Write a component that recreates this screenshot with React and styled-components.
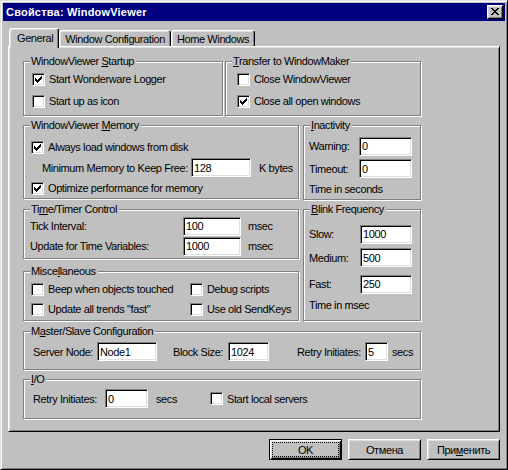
import React from 'react';
import styled, { createGlobalStyle } from 'styled-components';

const GlobalStyle = createGlobalStyle`
  html, body {
    margin: 0;
    padding: 0;
    background: #c0c0c0;
  }
  body {
    font-family: "Liberation Sans", Arial, sans-serif;
    font-size: 11px;
    color: #000;
  }
  * {
    box-sizing: border-box;
  }
`;

const Window = styled.div`
  width: 508px;
  height: 470px;
  background: #c0c0c0;
  border: 1px solid;
  border-color: #dfdfdf #000 #000 #dfdfdf;
  box-shadow: inset 1px 1px #fff, inset -1px -1px #808080;
  padding: 2px;
  display: flex;
  flex-direction: column;
  letter-spacing: -0.4px;
`;

const TitleBar = styled.div`
  height: 18px;
  background: #000080;
  color: #fff;
  font-weight: bold;
  display: flex;
  align-items: center;
  justify-content: space-between;
  padding: 0 2px 0 3px;
  letter-spacing: 0.2px;
`;

const CloseButton = styled.div`
  width: 16px;
  height: 14px;
  background: #c0c0c0;
  border: 1px solid;
  border-color: #fff #000 #000 #fff;
  box-shadow: inset 1px 1px #dfdfdf, inset -1px -1px #808080;
  display: flex;
  align-items: center;
  justify-content: center;
  padding-bottom: 1px;
`;

const TabStrip = styled.div`
  display: flex;
  align-items: flex-end;
  margin: 7px 0 0 6px;
`;

const Tab = styled.div`
  position: relative;
  z-index: ${p => (p.$active ? 1 : 0)};
  height: ${p => (p.$active ? 20 : 16)}px;
  margin-bottom: ${p => (p.$active ? -2 : 0)}px;
  padding: ${p => (p.$active ? '0 5px 2px 7px' : '1px 5px 0 5px')};
  display: flex;
  align-items: center;
  white-space: nowrap;
  background: #c0c0c0;
  border: 1px solid;
  border-bottom: none;
  border-color: #fff #000 transparent #fff;
  border-radius: 3px 3px 0 0;
  box-shadow: inset -1px 0 #808080, inset 1px 1px #dfdfdf;
`;

const Panel = styled.div`
  width: 492px;
  height: 386px;
  margin-left: 5px;
  border: 1px solid;
  border-color: #fff #000 #000 #fff;
  box-shadow: inset 1px 1px #dfdfdf, inset -1px -1px #808080;
  padding: 14px 0 0 14px;
`;

const Content = styled.div`
  width: 398px;
  display: flex;
  flex-direction: column;
`;

const TopRow = styled.div`
  display: flex;
  gap: 2px;
`;

const MidGrid = styled.div`
  display: grid;
  grid-template-columns: 276px 118px;
  column-gap: 4px;
  align-items: start;
  margin-top: 9px;
`;

const Column = styled.div`
  display: flex;
  flex-direction: column;
`;

const Group = styled.div`
  position: relative;
  width: ${p => (p.$w ? `${p.$w}px` : 'auto')};
  height: ${p => p.$h}px;
  margin-top: ${p => p.$mt || 0}px;
  padding: ${p => p.$pt}px 0 0 ${p => p.$pl}px;
  border: 1px solid #808080;
  box-shadow: inset 1px 1px #fff, 1px 1px #fff;
`;

const Legend = styled.span`
  position: absolute;
  top: -7px;
  left: 6px;
  padding: 0 2px 0 1px;
  line-height: 13px;
  background: #c0c0c0;
  white-space: nowrap;
`;

const Row = styled.div`
  display: flex;
  align-items: center;
  height: ${p => p.$h}px;
  padding-left: ${p => p.$indent || 0}px;
  white-space: nowrap;
`;

const CheckGrid = styled.div`
  display: grid;
  grid-template-columns: 159px auto;
  grid-auto-rows: 20px;
  align-items: center;
`;

const Label = styled.span`
  flex: none;
  width: ${p => (p.$w ? `${p.$w}px` : 'auto')};
  margin-left: ${p => p.$ml || 0}px;
  white-space: nowrap;
`;

const Field = styled.input`
  flex: none;
  width: ${p => p.$w}px;
  height: 19px;
  margin: 0;
  padding: 0 0 0 2px;
  font: inherit;
  letter-spacing: inherit;
  color: #000;
  background: #fff;
  border: 1px solid;
  border-color: #808080 #fff #fff #808080;
  box-shadow: inset 1px 1px #000, inset -1px -1px #dfdfdf;
  outline: none;
`;

const CheckItem = styled.label`
  display: flex;
  align-items: center;
  gap: 4px;
  margin-left: ${p => p.$ml || 0}px;
  white-space: nowrap;
`;

const Box = styled.span`
  flex: none;
  width: 13px;
  height: 13px;
  background: #fff;
  border: 1px solid;
  border-color: #808080 #fff #fff #808080;
  box-shadow: inset 1px 1px #000, inset -1px -1px #dfdfdf;
  display: flex;
  align-items: center;
  justify-content: center;
`;

const Footer = styled.div`
  display: flex;
  justify-content: flex-end;
  gap: 6px;
  margin-top: 7px;
  padding-right: 5px;
`;

const Button = styled.div`
  width: 73px;
  height: 21px;
  display: flex;
  align-items: center;
  justify-content: center;
  border: 1px solid;
  border-color: ${p => (p.$default ? '#000' : '#fff #000 #000 #fff')};
  box-shadow: ${p =>
    p.$default
      ? 'inset 1px 1px #fff, inset -1px -1px #000, inset 2px 2px #dfdfdf, inset -2px -2px #808080'
      : 'inset 1px 1px #dfdfdf, inset -1px -1px #808080'};
  padding: 3px;
`;

const Focus = styled.span`
  flex: 1;
  align-self: stretch;
  display: flex;
  align-items: center;
  justify-content: center;
  outline: ${p => (p.$on ? '1px dotted #000' : 'none')};
`;

const CheckMark = () => (
  <svg width="7" height="7" viewBox="0 0 7 7" shapeRendering="crispEdges">
    {[2, 3, 4, 3, 2, 1, 0].map((y, x) => (
      <rect key={x} x={x} y={y} width="1" height="3" fill="#000" />
    ))}
  </svg>
);

const CloseGlyph = () => (
  <svg width="8" height="7" viewBox="0 0 8 7" shapeRendering="crispEdges">
    <rect x="0" y="0" width="2" height="1" />
    <rect x="6" y="0" width="2" height="1" />
    <rect x="1" y="1" width="2" height="1" />
    <rect x="5" y="1" width="2" height="1" />
    <rect x="2" y="2" width="4" height="1" />
    <rect x="3" y="3" width="2" height="1" />
    <rect x="2" y="4" width="4" height="1" />
    <rect x="1" y="5" width="2" height="1" />
    <rect x="5" y="5" width="2" height="1" />
    <rect x="0" y="6" width="2" height="1" />
    <rect x="6" y="6" width="2" height="1" />
  </svg>
);

const Check = ({ checked, children, ml }) => (
  <CheckItem $ml={ml}>
    <Box>{checked && <CheckMark />}</Box>
    <span>{children}</span>
  </CheckItem>
);

const Input = ({ w, value }) => <Field $w={w} value={value} readOnly />;

export default function App() {
  return (
    <>
      <GlobalStyle />
      <Window>
        <TitleBar>
          <span>Свойства: WindowViewer</span>
          <CloseButton>
            <CloseGlyph />
          </CloseButton>
        </TitleBar>

        <TabStrip>
          <Tab $active>General</Tab>
          <Tab>Window Configuration</Tab>
          <Tab>Home Windows</Tab>
        </TabStrip>

        <Panel>
          <Content>
            <TopRow>
              <Group $w={200} $h={55} $pt={6} $pl={8}>
                <Legend>WindowViewer <u>S</u>tartup</Legend>
                <Row $h={22}><Check checked>Start Wonderware Logger</Check></Row>
                <Row $h={22}><Check>Start up as icon</Check></Row>
              </Group>
              <Group $w={196} $h={55} $pt={6} $pl={11}>
                <Legend><u>T</u>ransfer to WindowMaker</Legend>
                <Row $h={22}><Check>Close WindowViewer</Check></Row>
                <Row $h={22}><Check checked>Close all open windows</Check></Row>
              </Group>
            </TopRow>

            <MidGrid>
              <Column>
                <Group $h={74} $pt={11} $pl={7}>
                  <Legend>WindowViewer <u>M</u>emory</Legend>
                  <Row $h={20}><Check checked>Always load windows from disk</Check></Row>
                  <Row $h={21}>
                    <Label $w={149} $ml={11}>Minimum Memory to Keep Free:</Label>
                    <Input w={60} value="128" />
                    <Label $ml={8}>K bytes</Label>
                  </Row>
                  <Row $h={20}><Check checked>Optimize performance for memory</Check></Row>
                </Group>

                <Group $h={50} $mt={10} $pt={6} $pl={6}>
                  <Legend>Ti<u>m</u>e/Timer Control</Legend>
                  <Row $h={20}>
                    <Label $w={153}>Tick Interval:</Label>
                    <Input w={58} value="100" />
                    <Label $ml={7}>msec</Label>
                  </Row>
                  <Row $h={20}>
                    <Label $w={153}>Update for Time Variables:</Label>
                    <Input w={58} value="1000" />
                    <Label $ml={7}>msec</Label>
                  </Row>
                </Group>

                <Group $h={50} $mt={12} $pt={7} $pl={7}>
                  <Legend>Misce<u>l</u>laneous</Legend>
                  <CheckGrid>
                    <Check>Beep when objects touched</Check>
                    <Check>Debug scripts</Check>
                    <Check>Update all trends "fast"</Check>
                    <Check>Use old SendKeys</Check>
                  </CheckGrid>
                </Group>
              </Column>

              <Column>
                <Group $h={75} $pt={9} $pl={5}>
                  <Legend><u>I</u>nactivity</Legend>
                  <Row $h={22}>
                    <Label $w={50}>Warning:</Label>
                    <Input w={53} value="0" />
                  </Row>
                  <Row $h={23}>
                    <Label $w={50}>Timeout:</Label>
                    <Input w={53} value="0" />
                  </Row>
                  <Row $h={18}>Time in seconds</Row>
                </Group>

                <Group $h={112} $mt={9} $pt={12} $pl={5}>
                  <Legend><u>B</u>link Frequency</Legend>
                  <Row $h={24}>
                    <Label $w={51}>Slow:</Label>
                    <Input w={52} value="1000" />
                  </Row>
                  <Row $h={23}>
                    <Label $w={51}>Medium:</Label>
                    <Input w={52} value="500" />
                  </Row>
                  <Row $h={30}>
                    <Label $w={51}>Fast:</Label>
                    <Input w={52} value="250" />
                  </Row>
                  <Row $h={12}>Time in msec</Row>
                </Group>
              </Column>
            </MidGrid>

            <Group $h={39} $mt={10} $pt={10} $pl={9}>
              <Legend>M<u>a</u>ster/Slave Configuration</Legend>
              <Row $h={19}>
                <Label $w={64}>Server Node:</Label>
                <Input w={60} value="Node1" />
                <Label $w={55} $ml={16}>Block Size:</Label>
                <Input w={41} value="1024" />
                <Label $w={68} $ml={28}>Retry Initiates:</Label>
                <Input w={23} value="5" />
                <Label $ml={4}>secs</Label>
              </Row>
            </Group>

            <Group $h={40} $mt={9} $pt={9} $pl={9}>
              <Legend><u>I</u>/O</Legend>
              <Row $h={19}>
                <Label $w={72}>Retry Initiates:</Label>
                <Input w={43} value="0" />
                <Label $w={54} $ml={8}>secs</Label>
                <Check>Start local servers</Check>
              </Row>
            </Group>
          </Content>
        </Panel>

        <Footer>
          <Button $default><Focus $on>OK</Focus></Button>
          <Button><Focus>Отмена</Focus></Button>
          <Button><Focus>При<u>м</u>енить</Focus></Button>
        </Footer>
      </Window>
    </>
  );
}
